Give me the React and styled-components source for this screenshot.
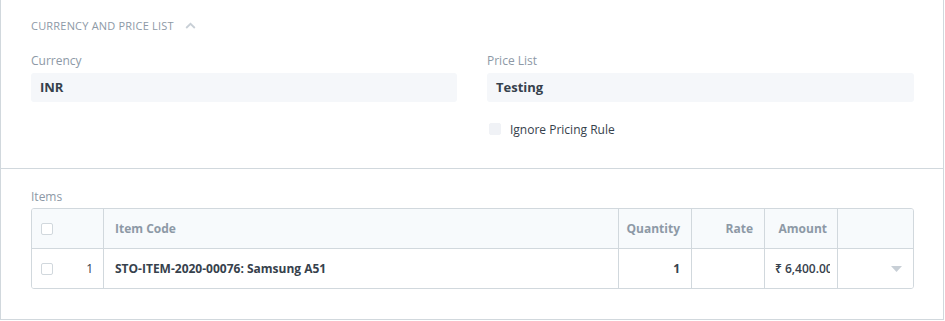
import React from 'react';
import styled, { createGlobalStyle } from 'styled-components';

const GlobalStyle = createGlobalStyle`
  body {
    margin: 0;
    background: #fff;
    font-family: "Open Sans", "Noto Sans", sans-serif;
    color: #36414c;
  }
`;

const Card = styled.div`
  width: 944px;
  height: 320px;
  box-sizing: border-box;
  border-left: 1px solid #d1d8dd;
  border-right: 1px solid #d1d8dd;
  border-bottom: 1px solid #d1d8dd;
`;

const Section = styled.div`
  padding: ${(p) => p.$pad};
  height: ${(p) => (p.$height ? `${p.$height}px` : 'auto')};
  border-bottom: ${(p) => (p.$divider ? '1px solid #d1d8dd' : 'none')};
`;

const SectionHead = styled.div`
  display: flex;
  align-items: center;
  gap: 11px;
  font-size: 11px;
  letter-spacing: 0.2px;
  color: #8d99a6;
  text-transform: uppercase;
  height: 18px;
`;

const Columns = styled.div`
  display: grid;
  grid-template-columns: 426px 427px;
  column-gap: 30px;
  margin-top: 18px;
`;

const Field = styled.div`
  display: flex;
  flex-direction: column;
`;

const Label = styled.div`
  font-size: 12px;
  color: #8d99a6;
  height: 18px;
  line-height: 18px;
  margin-bottom: ${(p) => p.$gap ?? 3}px;
`;

const ValueBox = styled.div`
  height: 29px;
  line-height: 29px;
  background: #f5f7fa;
  border-radius: 3px;
  padding: 0 9px;
  font-size: 13px;
  font-weight: 700;
  color: #36414c;
`;

const CheckRow = styled.label`
  display: flex;
  align-items: center;
  gap: 9px;
  margin-top: 19px;
  padding-left: 2px;
  font-size: 12px;
  color: #36414c;
  height: 16px;
`;

const Check = styled.span`
  width: 12px;
  height: 12px;
  box-sizing: border-box;
  border-radius: 2px;
  background: ${(p) => (p.$filled ? '#f0f2f6' : '#fff')};
  border: 1px solid ${(p) => (p.$filled ? '#f0f2f6' : '#d1d8dd')};
  display: inline-block;
  flex-shrink: 0;
`;

const Table = styled.div`
  border: 1px solid #d1d8dd;
  border-radius: 3px;
  overflow: hidden;
`;

const Row = styled.div`
  display: grid;
  grid-template-columns: 72px 515px 73px 73px 73px 1fr;
  height: 39px;
  background: ${(p) => (p.$head ? '#f7fafc' : '#fff')};
  border-bottom: ${(p) => (p.$head ? '1px solid #d1d8dd' : 'none')};
`;

const Cell = styled.div`
  display: flex;
  align-items: center;
  justify-content: ${(p) => p.$justify || 'flex-start'};
  padding: 0 ${(p) => p.$pr ?? 11}px 0 ${(p) => p.$pl ?? 11}px;
  border-right: ${(p) => (p.$last ? 'none' : '1px solid #d1d8dd')};
  font-size: 12px;
  font-weight: 700;
  color: ${(p) => (p.$head ? '#8d99a6' : '#36414c')};
  white-space: nowrap;
  overflow: hidden;
  min-width: 0;
`;

const Clip = styled.span`
  display: block;
  overflow: hidden;
  white-space: nowrap;
  font-weight: 600;
  min-width: 0;
  flex: 1;
`;

const RowNum = styled.span`
  margin-left: auto;
  font-weight: 400;
  color: #36414c;
`;

const Caret = styled.svg`
  margin-left: auto;
  margin-right: 11px;
`;

const Chevron = () => (
  <svg width="11" height="7" viewBox="0 0 11 7">
    <path d="M1.2 6 L5.5 1.8 L9.8 6" fill="none" stroke="#c8cfd6" strokeWidth="1.8" />
  </svg>
);

export default function App() {
  return (
    <>
      <GlobalStyle />
      <Card>
        <Section $pad="16px 29px 0 30px" $divider $height={152}>
          <SectionHead>
            <span>Currency and Price List</span>
            <Chevron />
          </SectionHead>
          <Columns>
            <Field>
              <Label>Currency</Label>
              <ValueBox>INR</ValueBox>
            </Field>
            <Field>
              <Label>Price List</Label>
              <ValueBox>Testing</ValueBox>
              <CheckRow>
                <Check $filled />
                Ignore Pricing Rule
              </CheckRow>
            </Field>
          </Columns>
        </Section>
        <Section $pad="19px 29px 0 30px">
          <Label $gap={2}>Items</Label>
          <Table>
            <Row $head>
              <Cell $head $pl={9}>
                <Check />
              </Cell>
              <Cell $head>Item Code</Cell>
              <Cell $head $justify="flex-end">Quantity</Cell>
              <Cell $head $justify="flex-end">Rate</Cell>
              <Cell $head $justify="flex-end" $pr={10}>Amount</Cell>
              <Cell $head $last />
            </Row>
            <Row>
              <Cell $pl={9} $pr={10}>
                <Check />
                <RowNum>1</RowNum>
              </Cell>
              <Cell>STO-ITEM-2020-00076: Samsung A51</Cell>
              <Cell $justify="flex-end">1</Cell>
              <Cell $justify="flex-end" />
              <Cell $pl={10} $pr={7}>
                <Clip>₹ 6,400.00</Clip>
              </Cell>
              <Cell $last $pl={0} $pr={0}>
                <Caret width="11" height="6" viewBox="0 0 11 6">
                  <path d="M0 0 H11 L5.5 6 Z" fill="#c8cfd6" />
                </Caret>
              </Cell>
            </Row>
          </Table>
        </Section>
      </Card>
    </>
  );
}
